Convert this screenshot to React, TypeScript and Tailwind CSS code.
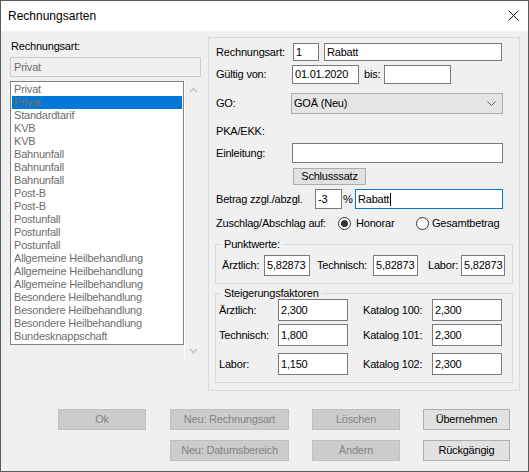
import React from "react";

const items = [
  "Privat",
  "Privat",
  "Standardtarif",
  "KVB",
  "KVB",
  "Bahnunfall",
  "Bahnunfall",
  "Bahnunfall",
  "Post-B",
  "Post-B",
  "Postunfall",
  "Postunfall",
  "Postunfall",
  "Allgemeine Heilbehandlung",
  "Allgemeine Heilbehandlung",
  "Allgemeine Heilbehandlung",
  "Besondere Heilbehandlung",
  "Besondere Heilbehandlung",
  "Besondere Heilbehandlung",
  "Bundesknappschaft",
];

function Field({ className = "", children }: { className?: string; children?: React.ReactNode }) {
  return (
    <div
      className={
        "flex shrink-0 items-center overflow-hidden whitespace-nowrap border border-[#7a7a7a] bg-white pl-[2px] text-black " +
        className
      }
    >
      {children}
    </div>
  );
}

function Btn({ label, enabled, className = "" }: { label: string; enabled?: boolean; className?: string }) {
  return (
    <div
      className={
        (enabled
          ? "border-[#adadad] bg-[#e1e1e1] text-black "
          : "border-[#bfbfbf] bg-[#cccccc] text-[#838383] ") +
        "flex shrink-0 items-center justify-center border " +
        className
      }
    >
      {label}
    </div>
  );
}

function Radio({ checked }: { checked?: boolean }) {
  return (
    <div className="flex h-[13px] w-[13px] shrink-0 items-center justify-center rounded-full border border-[#333333] bg-white">
      {checked && <div className="h-[7px] w-[7px] rounded-full bg-[#333333]" />}
    </div>
  );
}

function Chevron({ up }: { up?: boolean }) {
  return (
    <svg width="9" height="6" viewBox="0 0 9 6">
      <polyline
        points={up ? "1,5 4.5,1.5 8,5" : "1,1 4.5,4.5 8,1"}
        fill="none"
        stroke="#c4c4c4"
        strokeWidth="1.6"
      />
    </svg>
  );
}

export default function App() {
  return (
    <div className="flex h-[472px] w-[529px] flex-col border border-[#5b5b5b] bg-[#f0f0f0] font-['Liberation_Sans',Arial,sans-serif] text-[11px] leading-[13px] tracking-[-0.2px] text-black">
      {/* Title bar */}
      <div className="flex h-[30px] shrink-0 items-start justify-between bg-white pl-[7px] pr-[9px] pt-[8px]">
        <span className="text-[12px] leading-[14px] tracking-normal text-black">Rechnungsarten</span>
        <svg width="11" height="11" viewBox="0 0 11 11" className="mt-[1px]">
          <line x1="0.5" y1="0.5" x2="10.5" y2="10.5" stroke="#111" strokeWidth="1" />
          <line x1="10.5" y1="0.5" x2="0.5" y2="10.5" stroke="#111" strokeWidth="1" />
        </svg>
      </div>

      {/* Body */}
      <div className="flex items-start">
        {/* Left column */}
        <div className="ml-[9px] flex w-[191px] flex-col pt-[9px]">
          <div className="pl-[1px]">Rechnungsart:</div>
          <div className="mt-[4px] flex h-[20px] items-center border border-[#cccccc] bg-[#f0f0f0] pl-[3px] text-[#6d6d6d]">
            Privat
          </div>
          <div className="mt-[4px] flex items-start">
            <div className="h-[264px] w-[174px] border border-[#828282] bg-white p-[1px]">
              {items.map((it, i) => (
                <div
                  key={i}
                  className={
                    (i === 1 ? "bg-[#0078d7] text-[#7d6f62] " : "text-[#6d6d6d] ") +
                    "h-[13px] whitespace-nowrap pl-[2px] leading-[13px]"
                  }
                >
                  {it}
                </div>
              ))}
            </div>
            <div className="flex h-[278px] w-[17px] flex-col items-center justify-between border-l border-white pb-[5px] pt-[6px]">
              <Chevron up />
              <Chevron />
            </div>
          </div>
        </div>

        {/* Right panel */}
        <div className="ml-[7px] mt-[6px] flex w-[312px] flex-col border border-[#dadada] pb-[7px] pt-[5px]">
          {/* Row 1 */}
          <div className="flex h-[18px] items-center">
            <span className="w-[84px] shrink-0 pl-[7px]">Rechnungsart:</span>
            <Field className="h-[18px] w-[26px]">1</Field>
            <Field className="ml-[5px] h-[18px] w-[178px]">Rabatt</Field>
          </div>
          {/* Row 2 */}
          <div className="mt-[4px] flex h-[19px] items-center">
            <span className="w-[83px] shrink-0 pl-[7px]">Gültig von:</span>
            <Field className="h-[19px] w-[67px]">01.01.2020</Field>
            <span className="w-[25px] shrink-0 pl-[5px]">bis:</span>
            <Field className="h-[19px] w-[67px]" />
          </div>
          {/* Row 3 */}
          <div className="mt-[9px] flex h-[21px] items-center">
            <span className="w-[82px] shrink-0 pl-[7px]">GO:</span>
            <div className="flex h-[21px] w-[212px] items-center justify-between border border-[#acacac] bg-[#e5e5e5] pl-[2px] pr-[6px]">
              <span>GOÄ (Neu)</span>
              <svg width="9" height="5" viewBox="0 0 9 5">
                <polyline points="0.5,0.5 4.5,4.5 8.5,0.5" fill="none" stroke="#606060" strokeWidth="1" />
              </svg>
            </div>
          </div>
          {/* PKA */}
          <div className="mt-[11px] pl-[7px]">PKA/EKK:</div>
          {/* Einleitung */}
          <div className="mt-[5px] flex h-[20px] items-center">
            <span className="w-[83px] shrink-0 pl-[7px]">Einleitung:</span>
            <Field className="h-[20px] w-[211px]" />
          </div>
          {/* Schlusssatz */}
          <div className="mt-[5px] flex">
            <Btn label="Schlusssatz" enabled className="ml-[84px] h-[17px] w-[73px]" />
          </div>
          {/* Betrag */}
          <div className="mt-[4px] flex h-[20px] items-center">
            <span className="w-[106px] shrink-0 pl-[7px]">Betrag zzgl./abzgl.</span>
            <Field className="h-[20px] w-[27px]">-3</Field>
            <span className="w-[13px] shrink-0 pl-[1px]">%</span>
            <div className="flex h-[20px] w-[148px] items-center border border-[#0078d7] bg-white pl-[2px]">
              <span>Rabatt</span>
              <span className="ml-[1px] h-[13px] w-[1px] bg-black" />
            </div>
          </div>
          {/* Radios */}
          <div className="mt-[8px] flex h-[13px] items-center">
            <span className="w-[129px] shrink-0 pl-[7px]">Zuschlag/Abschlag auf:</span>
            <Radio checked />
            <span className="ml-[5px] w-[60px] shrink-0">Honorar</span>
            <Radio />
            <span className="ml-[3px]">Gesamtbetrag</span>
          </div>

          {/* Punktwerte */}
          <fieldset className="ml-[6px] mt-[8px] w-[298px] border border-[#dadada] p-0 pb-[7px]">
            <legend className="ml-[5px] px-[3px] leading-[13px]">Punktwerte:</legend>
            <div className="mt-[4px] flex h-[21px] items-center">
              <span className="w-[48px] shrink-0 pl-[6px]">Ärztlich:</span>
              <Field className="h-[21px] w-[46px]">5,82873</Field>
              <span className="w-[63px] shrink-0 pl-[7px]">Technisch:</span>
              <Field className="h-[21px] w-[45px]">5,82873</Field>
              <span className="w-[43px] shrink-0 pl-[10px]">Labor:</span>
              <Field className="h-[21px] w-[44px]">5,82873</Field>
            </div>
          </fieldset>

          {/* Steigerungsfaktoren */}
          <fieldset className="ml-[6px] mt-[3px] w-[298px] border border-[#dadada] p-0 pb-[7px]">
            <legend className="ml-[5px] px-[3px] leading-[12px]">Steigerungsfaktoren</legend>
            <div className="flex h-[22px] items-center">
              <span className="w-[62px] shrink-0 pl-[3px]">Ärztlich:</span>
              <Field className="h-[22px] w-[70px]">2,300</Field>
              <span className="w-[84px] shrink-0 pl-[15px]">Katalog 100:</span>
              <Field className="h-[22px] w-[70px]">2,300</Field>
            </div>
            <div className="mt-[3px] flex h-[22px] items-center">
              <span className="w-[62px] shrink-0 pl-[3px]">Technisch:</span>
              <Field className="h-[22px] w-[70px]">1,800</Field>
              <span className="w-[84px] shrink-0 pl-[15px]">Katalog 101:</span>
              <Field className="h-[22px] w-[70px]">2,300</Field>
            </div>
            <div className="mt-[7px] flex h-[22px] items-center">
              <span className="w-[62px] shrink-0 pl-[3px]">Labor:</span>
              <Field className="h-[22px] w-[70px]">1,150</Field>
              <span className="w-[84px] shrink-0 pl-[15px]">Katalog 102:</span>
              <Field className="h-[22px] w-[70px]">2,300</Field>
            </div>
          </fieldset>
        </div>
      </div>

      {/* Buttons */}
      <div className="mt-[18px] flex">
        <Btn label="Ok" className="ml-[57px] h-[21px] w-[88px]" />
        <Btn label="Neu: Rechnungsart" className="ml-[24px] h-[21px] w-[119px]" />
        <Btn label="Löschen" className="ml-[23px] h-[21px] w-[88px]" />
        <Btn label="Übernehmen" enabled className="ml-[23px] h-[21px] w-[87px]" />
      </div>
      <div className="mt-[10px] flex">
        <Btn label="Neu: Datumsbereich" className="ml-[169px] h-[21px] w-[119px]" />
        <Btn label="Ändern" className="ml-[23px] h-[21px] w-[88px]" />
        <Btn label="Rückgängig" enabled className="ml-[23px] h-[21px] w-[87px]" />
      </div>
    </div>
  );
}
